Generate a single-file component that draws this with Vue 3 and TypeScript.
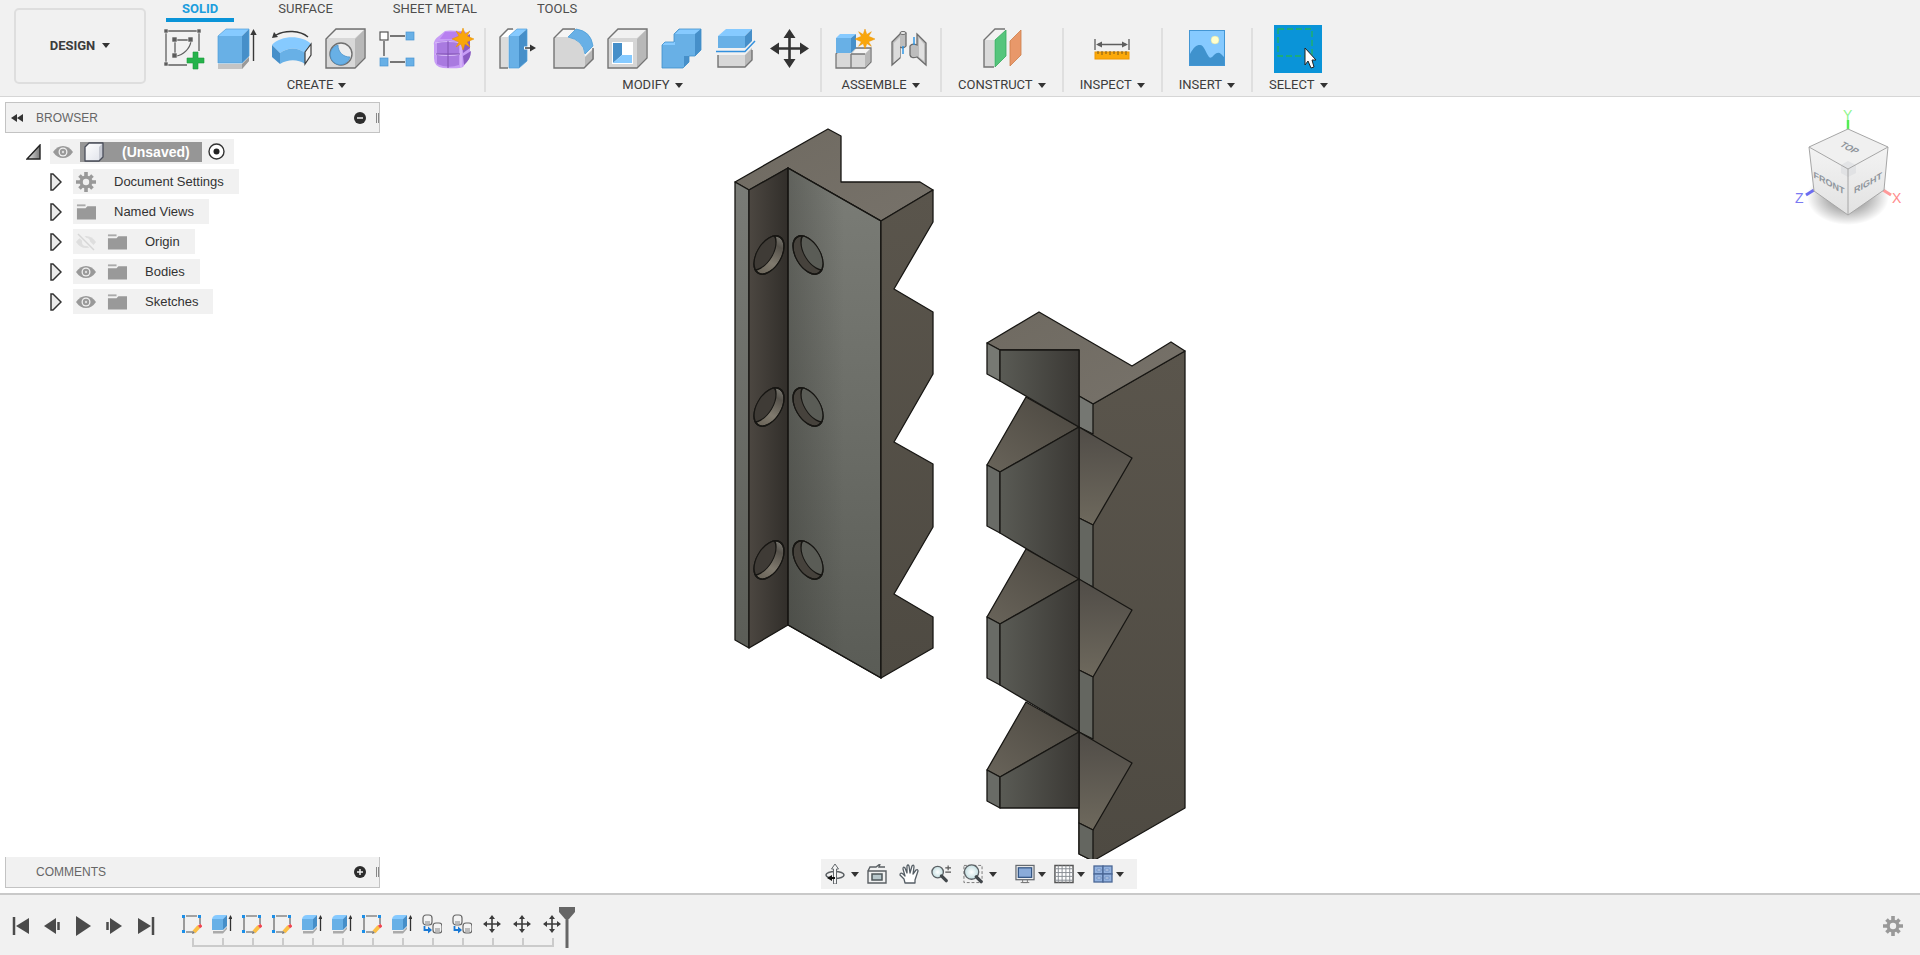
<script setup lang="ts">
import { ref } from 'vue'

interface Tool { id: string; name: string }
interface Group { label: string; tools: Tool[]; compact?: boolean }
interface TreeNode { label: string; icon: string; eye?: 'eye' | 'eye-off' }

const tabs = ['SOLID', 'SURFACE', 'SHEET METAL', 'TOOLS']
const activeTab = ref('SOLID')

const groups: Group[] = [
  {
    label: 'CREATE',
    tools: [
      { id: 'sketch', name: 'Create sketch' },
      { id: 'extrude', name: 'Extrude' },
      { id: 'revolve', name: 'Revolve' },
      { id: 'hole', name: 'Hole' },
      { id: 'pattern', name: 'Rectangular pattern' },
      { id: 'form', name: 'Create form' },
    ],
  },
  {
    label: 'MODIFY',
    tools: [
      { id: 'presspull', name: 'Press pull' },
      { id: 'fillet', name: 'Fillet' },
      { id: 'shell', name: 'Shell' },
      { id: 'combine', name: 'Combine' },
      { id: 'split', name: 'Split body' },
      { id: 'move', name: 'Move' },
    ],
  },
  {
    label: 'ASSEMBLE',
    tools: [
      { id: 'component', name: 'New component' },
      { id: 'joint', name: 'Joint' },
    ],
  },
  { label: 'CONSTRUCT', compact: true, tools: [{ id: 'plane', name: 'Offset plane' }] },
  { label: 'INSPECT', compact: true, tools: [{ id: 'measure', name: 'Measure' }] },
  { label: 'INSERT', compact: true, tools: [{ id: 'image', name: 'Insert image' }] },
  { label: 'SELECT', compact: true, tools: [{ id: 'select', name: 'Select' }] },
]

const nodes: TreeNode[] = [
  { label: 'Document Settings', icon: 'gear' },
  { label: 'Named Views', icon: 'folder' },
  { label: 'Origin', icon: 'folder', eye: 'eye-off' },
  { label: 'Bodies', icon: 'folder', eye: 'eye' },
  { label: 'Sketches', icon: 'folder', eye: 'eye' },
]

const playback: Tool[] = [
  { id: 'pb-first', name: 'Go to start' },
  { id: 'pb-prev', name: 'Step back' },
  { id: 'pb-play', name: 'Play' },
  { id: 'pb-next', name: 'Step forward' },
  { id: 'pb-last', name: 'Go to end' },
]

const features = [
  't-sketch', 't-extrude', 't-sketch', 't-sketch', 't-extrude', 't-extrude', 't-sketch',
  't-extrude', 't-copy', 't-copy', 't-move', 't-move', 't-move',
]

const holeRows = [255, 407, 560]
const teeth = [0, 152, 305]
</script>

<template>
  <svg class="sprite" aria-hidden="true">
    <defs>
      <linearGradient id="g-tri" x1="0" y1="0" x2="1" y2="0"><stop offset="0" stop-color="#eee" /><stop offset="1" stop-color="#777" /></linearGradient>
      <linearGradient id="g-cube" x1="0" y1="0" x2="1" y2="1"><stop offset="0" stop-color="#fff" /><stop offset="1" stop-color="#dfe2ea" /></linearGradient>
      <radialGradient id="g-lens"><stop offset="0" stop-color="#fff" /><stop offset="1" stop-color="#c4dfe2" /></radialGradient>
    </defs>

    <symbol id="sketch" viewBox="0 0 42 42">
      <path d="M3 3H36M3 3V37M3 37H24M36 3V23" stroke="#606060" stroke-width="1.3" fill="none" />
      <path d="M12 12H28M12 12V28M28 13C27 21 20 27 13 28" stroke="#606060" stroke-width="1.3" fill="none" />
      <path d="M1 1h4v4h-4zM34 1h4v4h-4zM1 34h4v4h-4zM9 9h5v5h-5zM25 9h5v5h-5zM9 25h5v5h-5z" fill="#5c5c5c" stroke="#f1f1f1" stroke-width=".6" />
      <path d="M30 24h5v6h6v5h-6v6h-5v-6h-6v-5h6z" fill="#25b34b" stroke="#179a3b" stroke-width=".6" />
    </symbol>
    <symbol id="extrude" viewBox="0 0 42 42">
      <path d="M1 36h24l7-7v4l-7 8H1z" fill="#c4c4c4" /><path d="M25 36l7-7v4l-7 8z" fill="#999" />
      <path d="M1 8L9 1H32L25 8z" fill="#86caff" /><path d="M1 8H25V35H1z" fill="#68b0e6" /><path d="M25 8L32 1V28L25 35z" fill="#468fc9" />
      <path d="M1 8L9 1H32V28L25 35H1z" fill="none" stroke="#4d9ed8" stroke-width=".7" />
      <path d="M36.500 33V4" stroke="#383838" stroke-width="1.4" /><path d="M36.500 1l3.200 6h-6.400z" fill="#383838" />
    </symbol>
    <symbol id="revolve" viewBox="0 0 42 42">
      <path d="M5 7C14 2 29 2 37 9" fill="none" stroke="#383838" stroke-width="1.400" /><path d="M1 10l2-6 4 5z" fill="#383838" />
      <path d="M1 17C10 7 31 7 40 16L34 25C27 19 17 19 9 25z" fill="#86caff" />
      <path d="M1 17L9 25V36L1 29z" fill="#468fc9" /><path d="M9 25C17 19 27 19 34 25V36C27 31 17 31 9 36z" fill="#68b0e6" />
      <path d="M34 24L40 16V27L34 36z" fill="#f4f4f4" stroke="#3c3c3c" stroke-width="1.200" />
    </symbol>
    <symbol id="hole" viewBox="0 0 42 42">
      <path d="M1 11L11 1H40V30L30 40H1z" fill="#d8d8d8" /><path d="M2 10L11 2H39L30 10z" fill="#f1f1f1" /><path d="M30 11L39 2V30L30 39z" fill="#b8b8b8" />
      <path d="M1 11L11 1H40V30L30 40H1z" fill="none" stroke="#707070" stroke-width="1.400" />
      <circle cx="16" cy="26" r="11" fill="#eee" stroke="#707070" stroke-width="1.400" /><path d="M13 17A10 10 0 1 0 25 29C18 29 13 24 13 17z" fill="#68b0e6" stroke="#468fc9" stroke-width=".7" />
    </symbol>
    <symbol id="pattern" viewBox="0 0 42 42">
      <path d="M11 8H26M5 13V28M11 34H26" stroke="#4c4c4c" stroke-width="1.300" /><rect x="1" y="4" width="8" height="8" fill="#fff" stroke="#555" stroke-width="1.200" />
      <g fill="#68b0e6" stroke="#4a96d2" stroke-width=".7"><rect x="27" y="4" width="8" height="8" /><rect x="1" y="30" width="8" height="8" /><rect x="27" y="30" width="8" height="8" /></g>
    </symbol>
    <symbol id="form" viewBox="0 0 42 42">
      <path d="M1 17Q0 12 6 8L12 3Q15 2 28 3Q37 3 37 12V29L30 39Q27 41 10 40Q1 39 1 30z" fill="#c79cf6" />
      <path d="M12 4H30L26 11H7z" fill="#b77ff0" /><path d="M4 14Q15 11 26 14V37Q15 41 4 36z" fill="#a97ae0" /><path d="M29 12L37 6V20L30 25zM30 28L38 23Q38 31 31 37z" fill="#8a5ac2" />
      <path d="M2 15Q15 12 28 15V39M2 26Q15 29 28 26" fill="none" stroke="#d9bdf9" stroke-width="1.200" /><path d="M15 13V40M3 26H27" stroke="#7e51b0" stroke-width="1" />
      <use href="#spark" x="19" y="0" width="22" height="22" />
    </symbol>
    <symbol id="spark" viewBox="0 0 22 22"><path d="M11 0l2 6 5-3-3 5 7 3-7 3 3 5-5-3-2 6-2-6-5 3 3-5-7-3 7-3-3-5 5 3z" fill="#f9a60a" stroke="#e99000" stroke-width=".5" /></symbol>

    <symbol id="presspull" viewBox="0 0 42 42">
      <path d="M1 9L9 1H15L9 9V40H1z" fill="#dcdcdc" /><path d="M2 9L9 2H16L10 9z" fill="#fff" /><path d="M9 40H1V9L9 1H14" fill="none" stroke="#747474" stroke-width="1.400" />
      <path d="M10 8L18 1H28L20 8z" fill="#86caff" /><path d="M10 8H20V40H10z" fill="#68b0e6" /><path d="M20 8L28 1V33L20 40z" fill="#468fc9" /><path d="M10 8L18 1H28V33L20 40H10z" fill="none" stroke="#4d9ed8" stroke-width=".7" />
      <path d="M25 20H33" stroke="#fff" stroke-width="3" /><path d="M26 20H34" stroke="#333" stroke-width="1.400" /><path d="M31 16.500L37 20l-6 3.500z" fill="#333" />
    </symbol>
    <symbol id="fillet" viewBox="0 0 42 42">
      <path d="M1 10L10 1H22L15 9Q30 12 32 29L41 21V31L31 40H1z" fill="#d6d6d6" /><path d="M2 9L10 2H22L15 9z" fill="#f5f5f5" /><path d="M32 29L41 20V31L32 39z" fill="#b8b8b8" />
      <path d="M22 1H10L1 10V40H31L40 31V20" fill="none" stroke="#747474" stroke-width="1.400" /><path d="M15 9L23 1Q38 3 40 18L32 26Q30 12 15 9z" fill="#68b0e6" stroke="#4d9ed8" stroke-width=".8" />
    </symbol>
    <symbol id="shell" viewBox="0 0 42 42">
      <path d="M1 11L11 1H40V30L30 40H1z" fill="#d6d6d6" /><path d="M2 10L11 2H39L30 10z" fill="#f1f1f1" /><path d="M30 11L39 2V30L30 39z" fill="#b8b8b8" /><path d="M1 11L11 1H40V30L30 40H1z" fill="none" stroke="#747474" stroke-width="1.400" />
      <rect x="5" y="14" width="21" height="22" fill="#fff" /><path d="M6 15H15V27L6 35z" fill="#468fc9" /><path d="M15 27H25V35H6z" fill="#86caff" />
    </symbol>
    <symbol id="combine" viewBox="0 0 42 42">
      <path d="M1 17L4 14H13V6L18 1H40V22L34 28H28V34L22 40H1z" fill="#68b0e6" /><path d="M14 6L19 1H40L34 6zM1 17L4 14H14V17z" fill="#86caff" /><path d="M34 6L40 1V22L34 28zM23 28H28V34L23 39z" fill="#468fc9" />
      <path d="M1 17L4 14H13V6L18 1H40V22L34 28H28V34L22 40H1z" fill="none" stroke="#3f8fca" stroke-width=".8" />
    </symbol>
    <symbol id="split" viewBox="0 0 42 42">
      <path d="M3 8L11 1H37L30 8z" fill="#86caff" /><path d="M3 8H30V20H3z" fill="#68b0e6" /><path d="M30 8L37 1V13L30 20z" fill="#468fc9" /><path d="M1 23.500H30L40 13" fill="none" stroke="#3290de" stroke-width="1.500" />
      <path d="M3 27H30V39H3z" fill="#d8d8d8" /><path d="M30 27L37 20V32L30 39z" fill="#b8b8b8" /><path d="M3 27V39H30L37 32V22" fill="none" stroke="#747474" stroke-width="1.400" />
    </symbol>
    <symbol id="move" viewBox="0 0 42 42">
      <path d="M20.500 6V36M6 20.500H35" stroke="#333" stroke-width="2.600" /><path d="M20.500 1l6 9h-12zM20.500 40l6-9h-12zM1 20.500l9-6v12zM40 20.500l-9-6v12z" fill="#333" />
    </symbol>
    <symbol id="component" viewBox="0 0 42 42">
      <path d="M1 26L6 20H36V34L30 40H1z" fill="#d8d8d8" stroke="#777" stroke-width="1.300" /><path d="M17 26L21 21H35L30 26z" fill="#f5f5f5" /><path d="M30 26L35 21V34L30 39z" fill="#b8b8b8" /><path d="M16 26V40M16 26H30" stroke="#777" stroke-width="1.300" />
      <path d="M1 10L5 6H21L16 10z" fill="#86caff" /><path d="M1 10H16V25H1z" fill="#68b0e6" /><path d="M16 10L21 6V20L16 25z" fill="#468fc9" /><use href="#spark" x="20" y="1" width="20" height="20" />
    </symbol>
    <symbol id="joint" viewBox="0 0 42 42">
      <path d="M3 14L12 5Q14 3 17 5V18Q15 21 11 19V30L3 37z" fill="#bdbdbd" stroke="#6c6c6c" stroke-width="1.300" /><path d="M5 15L11 9V29L5 34z" fill="#dcdcdc" /><ellipse cx="14" cy="5" rx="3" ry="1.500" fill="#eee" stroke="#6c6c6c" />
      <path d="M28 6L37 15V37L28 29Q22 31 21 27V18Q23 15 28 17z" fill="#bdbdbd" stroke="#6c6c6c" stroke-width="1.300" /><path d="M30 10L35 16V33L30 29z" fill="#e0e0e0" /><path d="M14 18V26M25 9V17" stroke="#2492e6" stroke-width="1.400" />
    </symbol>
    <symbol id="plane" viewBox="0 0 42 42">
      <path d="M3 12L13 2H24L13 13V39H3z" fill="#f2f2f2" /><path d="M3 12H13V39H3z" fill="#dadada" /><path d="M13 39H3V12L14 1H24" fill="none" stroke="#747474" stroke-width="1.400" /><path d="M14 12L25 2V28L14 39z" fill="#55c57c" stroke="#35a95d" stroke-width=".8" /><path d="M29 13L40 2V27L29 38z" fill="#e8986a" stroke="#cd7d4a" stroke-width=".8" />
    </symbol>
    <symbol id="measure" viewBox="0 0 42 42">
      <path d="M4 11V22M38 11V22M7 16.500H35" stroke="#5e5e5e" stroke-width="1.300" /><path d="M5 16.500l6-3v6zM37 16.500l-6-3v6z" fill="#5e5e5e" /><rect x="4" y="24" width="34" height="7" fill="#fba90a" stroke="#ee9600" /><path d="M7 23v3M11 23v4M15 23v3M19 23v4M23 23v3M27 23v4M31 23v3M35 23v4" stroke="#77591c" />
    </symbol>
    <symbol id="image" viewBox="0 0 42 42">
      <rect x="3.500" y="2.500" width="35" height="35" fill="#86caff" stroke="#4396d4" /><path d="M4 26C8 19 10 17 14 17S20 25 23 29Q25 31 28 27Q32 23 35 26L38 29V37H4z" fill="#3f92cd" /><circle cx="29" cy="12" r="4" fill="#ffffcd" stroke="#d7dca0" stroke-width=".5" />
    </symbol>
    <symbol id="select" viewBox="0 0 48 48">
      <rect width="48" height="48" fill="#0a94d8" /><path d="M4 4H38V31H4z" fill="none" stroke="#22b35f" stroke-width="1.300" stroke-dasharray="6 3" /><path d="M31 23V40L34 36L37 43L40 42L38 35H42z" fill="#fff" stroke="#222" stroke-width="1" />
    </symbol>

    <symbol id="eye" viewBox="0 0 20 20"><path d="M0 10Q4 4 10 4T20 10Q16 16 10 16T0 10z" fill="#999" /><circle cx="10" cy="10" r="4.500" fill="#f1f1f1" /><circle cx="10" cy="10" r="3.200" fill="#999" /><circle cx="10" cy="10" r="1.200" fill="#ddd" /></symbol>
    <symbol id="eye-off" viewBox="0 0 20 20"><path d="M0 10Q4 4 10 4T20 10Q16 16 10 16T0 10z" fill="#dedede" /><circle cx="10" cy="10" r="4" fill="#f1f1f1" /><path d="M2 1L19 18" stroke="#f1f1f1" stroke-width="5" /><path d="M2 2L18 18" stroke="#d6d6d6" stroke-width="1.500" /></symbol>
    <symbol id="folder" viewBox="0 0 21 20"><path d="M1 6H10L12 4H21V18H1z" fill="#999" /><path d="M1 3H10" stroke="#aaa" stroke-width="2" /></symbol>
    <symbol id="gear" viewBox="0 0 20 20"><g stroke="#999" stroke-width="3.600"><path d="M10 0V20M0 10H20M3.500 3.500L16.500 16.500M16.500 3.500L3.500 16.500" /></g><circle cx="10" cy="10" r="6.500" fill="#999" /><circle cx="10" cy="10" r="3.200" fill="#f1f1f1" /></symbol>
    <symbol id="box" viewBox="0 0 20 20"><path d="M1 5L5 1H19V15L15 19H1z" fill="url(#g-cube)" /><path d="M15 5L19 1V15L15 19z" fill="#c6c9d2" /><path d="M1 5L5 1H19V15L15 19H1z" fill="none" stroke="#4a4e5a" stroke-width="1.300" stroke-linejoin="round" /></symbol>

    <symbol id="orbit" viewBox="0 0 20 20"><ellipse cx="10" cy="11" rx="9" ry="3.500" fill="none" stroke="#5b6064" stroke-width="1.600" /><path d="M8.500 20V5H6.500L10 0l3.500 5H11.500V20z" fill="#f5f5f5" stroke="#63686c" /><path d="M2 14l5-3v2h3v2H7v2z" fill="#111" /></symbol>
    <symbol id="look" viewBox="0 0 20 20"><path d="M1 7H19V19H1zM1 7L3 3H9L13 0 12 3H18" fill="#f0f1f1" stroke="#5b6064" stroke-width="1.400" /><rect x="5" y="10" width="10" height="6" fill="#b7c7cb" stroke="#4c5558" stroke-width="1.500" /></symbol>
    <symbol id="hand" viewBox="0 0 20 20"><path d="M6 19L5 15 1 11Q1 8 4 10L6 12 4 5Q4 2 6 4L8 9 8 2Q9 0 10 2L11 9 13 2Q15 0 15 3L14 10 17 6Q19 5 19 7L16 16V19z" fill="#fff" stroke="#555e65" stroke-width="1.300" stroke-linejoin="round" /></symbol>
    <symbol id="zoomtool" viewBox="0 0 21 20"><circle cx="7" cy="8" r="6" fill="url(#g-lens)" stroke="#5c6165" stroke-width="1.400" /><path d="M11 12L16 17" stroke="#42474b" stroke-width="3.500" stroke-linecap="round" /><path d="M18 1V6M15 3.500H21M15 8H21" stroke="#555" stroke-width="1.200" /></symbol>
    <symbol id="fit" viewBox="0 0 21 20"><path d="M1 1H20V19H1z" fill="none" stroke="#777" stroke-dasharray="3 2" /><circle cx="9" cy="8" r="7.500" fill="url(#g-lens)" stroke="#5c6165" stroke-width="1.400" /><path d="M14 13L19 18" stroke="#42474b" stroke-width="3.500" stroke-linecap="round" /></symbol>
    <symbol id="display" viewBox="0 0 21 20"><rect x="1" y="1" width="19" height="15" fill="#eee" stroke="#666b70" stroke-width="1.300" /><rect x="3.500" y="3.500" width="14" height="10" fill="#8aabd9" stroke="#315382" stroke-width="1.300" /><path d="M8 16v3h5v-3M6 19h9" fill="none" stroke="#777" /></symbol>
    <symbol id="gridtool" viewBox="0 0 21 20"><path d="M1 1H20V19H1z" fill="#fff" stroke="#555" stroke-width="1.500" /><path d="M4.500 1V19M8.500 1V19M12.500 1V19M16.500 1V19M1 4.500H20M1 8.500H20M1 12.500H20M1 16.500H20" stroke="#868b91" /></symbol>
    <symbol id="views" viewBox="0 0 20 20"><g fill="#93b2df" stroke="#4a6796" stroke-width="1.300"><rect x="1" y="2" width="9" height="8" /><rect x="10" y="2" width="9" height="8" /><rect x="1" y="10" width="9" height="8" /><rect x="10" y="10" width="9" height="8" /></g><path d="M4 5h4v2h-4zM12 5h4v2h-4zM4 13h4v2h-4zM12 13h4v2h-4z" fill="#c4d6f0" stroke="#6685b8" stroke-width=".7" /></symbol>

    <symbol id="pb-first" viewBox="0 0 20 20"><path d="M3 1V19" stroke="#4b4b4b" stroke-width="2.500" /><path d="M5 10L18 2V18z" fill="#4b4b4b" /></symbol>
    <symbol id="pb-prev" viewBox="0 0 20 20"><path d="M2 10L14 2V18z" fill="#4b4b4b" /><path d="M16.500 6V14" stroke="#4b4b4b" stroke-width="2.500" /></symbol>
    <symbol id="pb-play" viewBox="0 0 20 20"><path d="M3 0V20L18 10z" fill="#4b4b4b" /></symbol>
    <symbol id="pb-next" viewBox="0 0 20 20"><path d="M18 10L6 2V18z" fill="#4b4b4b" /><path d="M3.500 6V14" stroke="#4b4b4b" stroke-width="2.500" /></symbol>
    <symbol id="pb-last" viewBox="0 0 20 20"><path d="M18 1V19" stroke="#4b4b4b" stroke-width="2.500" /><path d="M16 10L3 2V18z" fill="#4b4b4b" /></symbol>

    <symbol id="t-sketch" viewBox="0 0 20 20"><path d="M4 2H15M2 4V16M4 18H11M18 4V10" stroke="#555" stroke-width="1.100" /><path d="M0 1h3v3h-3zM16 1h3v3h-3zM0 16h3v3h-3z" fill="#1c8fe8" /><path d="M12 18L17 12.500" stroke="#fbbf45" stroke-width="4" /><path d="M17 13L19.500 11" stroke="#f04450" stroke-width="3.500" /><path d="M10 20l1-3 2 2z" fill="#777" /></symbol>
    <symbol id="t-extrude" viewBox="0 0 20 20"><path d="M1 17H11L15 13V15L11 19.500H1z" fill="#aaa" /><path d="M0 5Q1 1 5 1H15L11 5z" fill="#86caff" /><path d="M0 5H11V16H0z" fill="#68b0e6" /><path d="M11 5L15 1V12L11 16z" fill="#468fc9" /><path d="M18.500 4V17" stroke="#333" stroke-width="1.300" /><path d="M18.500 1l2 4h-4z" fill="#333" /></symbol>
    <symbol id="t-copy" viewBox="0 0 20 20"><g fill="#f3f3f3" stroke="#666" stroke-width="1.200"><rect x="1" y="1" width="9" height="10" rx="3" /><rect x="11" y="9" width="9" height="10" rx="3" /></g><path d="M3 7h5v3h-5zM13 14h5v4h-5z" fill="#bbb" /><path d="M2.500 12V16H6" fill="none" stroke="#1878d4" stroke-width="1.800" /><path d="M6 12.500L10 16l-4 3.500z" fill="#1878d4" /></symbol>
    <symbol id="t-move" viewBox="0 0 20 20"><path d="M10 3V17M3 10H17" stroke="#3c3c3c" stroke-width="1.600" /><path d="M10 1l3 4H7zM10 19l3-4H7zM1 10l4-3v6zM19 10l-4-3v6z" fill="#3c3c3c" /></symbol>
  </svg>

  <div class="app">
    <header class="ribbon">
      <button class="workspace" type="button">DESIGN<i class="caret"></i></button>
      <div class="ribbon-body">
        <nav class="tabs" aria-label="Toolbar tabs">
          <button v-for="tab in tabs" :key="tab" type="button" class="tab" :class="{ active: tab === activeTab }" @click="activeTab = tab">{{ tab }}</button>
        </nav>
        <div class="groups">
          <section v-for="group in groups" :key="group.label" class="group" :class="{ compact: group.compact }">
            <div class="tools">
              <button v-for="tool in group.tools" :key="tool.id" type="button" class="tool" :class="{ chosen: tool.id === 'select' }" :aria-label="tool.name">
                <svg><use :href="'#' + tool.id" /></svg>
              </button>
            </div>
            <button type="button" class="group-label">{{ group.label }}<i class="caret"></i></button>
          </section>
        </div>
      </div>
    </header>

    <main class="viewport">
      <svg class="model" viewBox="730 120 460 745" role="img" aria-label="Two interlocking corner brackets">
        <defs>
          <linearGradient id="m-top" x1="0" y1="0" x2="1" y2="1"><stop offset="0" stop-color="#6f6a61" /><stop offset="1" stop-color="#77726a" /></linearGradient>
          <linearGradient id="m-dark" x1="0" y1="0" x2="1" y2="0"><stop offset="0" stop-color="#4c4741" /><stop offset="1" stop-color="#312e2a" /></linearGradient>
          <linearGradient id="m-front" x1="0" y1="0" x2="0" y2="1"><stop offset="0" stop-color="#7b7d77" /><stop offset=".5" stop-color="#6b6d67" /><stop offset="1" stop-color="#5a5c56" /></linearGradient>
          <linearGradient id="m-shade" x1="0" y1="0" x2="1" y2="0"><stop offset="0" stop-color="#30312d" stop-opacity=".36" /><stop offset=".6" stop-color="#30312d" stop-opacity="0" /></linearGradient>
          <linearGradient id="m-edge" x1="0" y1="0" x2="0" y2="1"><stop offset="0" stop-color="#7a7c77" /><stop offset="1" stop-color="#5b5d57" /></linearGradient>
          <linearGradient id="m-side" x1="0" y1="0" x2="0" y2="1"><stop offset="0" stop-color="#5a554c" /><stop offset="1" stop-color="#4e4a42" /></linearGradient>
          <linearGradient id="m-tooth" x1="0" y1="0" x2="1" y2="0"><stop offset="0" stop-color="#5a5b55" /><stop offset="1" stop-color="#3a3834" /></linearGradient>
          <linearGradient id="m-slope" x1="1" y1="0" x2="0" y2="1"><stop offset="0" stop-color="#4a463f" /><stop offset="1" stop-color="#69645a" /></linearGradient>
          <linearGradient id="m-slope2" x1="0" y1="0" x2="0" y2="1"><stop offset="0" stop-color="#504c47" /><stop offset="1" stop-color="#6e695d" /></linearGradient>
          <linearGradient id="m-rim" x1="0" y1="1" x2="1" y2="0"><stop offset="0" stop-color="#5d574c" /><stop offset=".4" stop-color="#807a6e" /><stop offset=".7" stop-color="#56524b" /><stop offset="1" stop-color="#96968f" /></linearGradient>
          <clipPath id="c-left"><ellipse rx="15" ry="17" transform="skewY(-30)" /></clipPath>
          <clipPath id="c-right"><ellipse rx="15" ry="17" transform="skewY(30)" /></clipPath>
        </defs>
        <g stroke="#171613" stroke-width="1.300" stroke-linejoin="round">
          <path d="M735 182L828 129L841 136V182H920L933 190L881 221L788 168L749 190z" fill="url(#m-top)" />
          <path d="M735 182L749 190V648L735 640z" fill="url(#m-edge)" />
          <path d="M749 190L788 168V625L749 648z" fill="url(#m-dark)" />
          <path d="M788 168L881 221V678L788 625z" fill="url(#m-front)" />
          <path d="M788 168L881 221V678L788 625z" fill="url(#m-shade)" />
          <path d="M881 221L933 190V222L894 289L933 312V374L894 442L933 464V527L894 594L933 617V648L881 678z" fill="url(#m-side)" />
          <template v-for="y in holeRows" :key="y">
            <g :transform="`translate(769 ${y})`">
              <ellipse rx="15" ry="17" transform="skewY(-30)" fill="url(#m-rim)" />
              <g clip-path="url(#c-left)"><ellipse rx="15" ry="17" transform="translate(-8 -4) skewY(-30)" fill="#3f3b36" /></g>
              <ellipse rx="15" ry="17" transform="skewY(-30)" fill="none" />
            </g>
            <g :transform="`translate(808 ${y})`">
              <ellipse rx="15" ry="17" transform="skewY(30)" fill="#46423c" />
              <g clip-path="url(#c-right)"><ellipse rx="15" ry="17" transform="translate(8 -4) skewY(30)" fill="#5a5c56" /></g>
              <ellipse rx="15" ry="17" transform="skewY(30)" fill="none" />
            </g>
          </template>

          <path d="M1093 404L1185 351V808L1093 861L1079 854V396z" fill="url(#m-side)" />
          <path d="M987 343L1039 312L1132 366L1171 342L1185 351L1093 404L1079 396V350H1000z" fill="url(#m-top)" />
          <path d="M1079 396L1093 404V434L1079 427z" fill="#757772" />
          <g v-for="(t, i) in teeth" :key="t" :transform="`translate(0 ${t})`">
            <path d="M1026 397L1079 427L1000 472L987 465z" fill="url(#m-slope)" />
            <path d="M1079 427L1132 458L1093 525L1079 518z" fill="url(#m-slope2)" />
            <path :d="i < 2 ? 'M1079 518L1093 525V587L1079 580z' : 'M1079 518L1093 525V556L1079 549z'" fill="#646660" />
            <path :d="i < 2 ? 'M987 465L1000 472V533L987 526z' : 'M987 465L1000 472V503L987 496z'" fill="#696b66" />
            <path :d="i < 2 ? 'M1000 472L1079 427V580L1000 533z' : 'M1000 472L1079 427V503H1000z'" fill="url(#m-tooth)" />
          </g>
          <path d="M987 343L1000 350V381L987 374z" fill="#777973" />
          <path d="M1000 350H1079V427L1000 381z" fill="url(#m-tooth)" />
        </g>
      </svg>

      <aside class="browser">
        <div class="panel">
          <button type="button" class="plain" aria-label="Collapse panel"><svg width="12" height="10" viewBox="0 0 12 10"><path d="M6 1V9L0 5zM12 1V9L6 5z" fill="#333" /></svg></button>
          <h2>BROWSER</h2>
          <button type="button" class="plain end" aria-label="Minimize"><svg width="12" height="12" viewBox="0 0 12 12"><circle cx="6" cy="6" r="6" fill="#2d2d2d" /><path d="M3 6H9" stroke="#f1f1f1" stroke-width="1.500" /></svg></button>
          <i class="grip"></i>
        </div>
        <ul class="tree">
          <li class="root">
            <button type="button" class="plain" aria-label="Collapse"><svg width="15" height="16" viewBox="0 0 15 16"><path d="M1 15L14 1V15z" fill="url(#g-tri)" stroke="#222" stroke-width="1.400" /></svg></button>
            <div class="chip">
              <svg class="ico"><use href="#eye" /></svg>
              <span class="doc"><svg class="ico"><use href="#box" /></svg>(Unsaved)</span>
              <svg width="17" height="17" viewBox="0 0 17 17"><circle cx="8.500" cy="8.500" r="7.500" fill="#fff" stroke="#333" stroke-width="1.400" /><circle cx="8.500" cy="8.500" r="3" fill="#222" /></svg>
            </div>
          </li>
          <li v-for="node in nodes" :key="node.label" class="child">
            <button type="button" class="plain" :aria-label="'Expand ' + node.label"><svg width="12" height="18" viewBox="0 0 12 18"><path d="M1 1H3L11 9L3 17H1z" fill="#eaeaea" stroke="#333" stroke-width="1.500" /></svg></button>
            <div class="chip">
              <svg v-if="node.eye" class="ico"><use :href="'#' + node.eye" /></svg>
              <svg class="ico"><use :href="'#' + node.icon" /></svg>
              <span>{{ node.label }}</span>
            </div>
          </li>
        </ul>
      </aside>

      <svg class="viewcube" width="112" height="132" viewBox="0 0 112 132" role="img" aria-label="View cube">
        <defs>
          <radialGradient id="v-shadow"><stop offset=".4" stop-color="#000" stop-opacity=".35" /><stop offset="1" stop-color="#000" stop-opacity="0" /></radialGradient>
          <linearGradient id="v-face" x1="0" y1="0" x2="0" y2="1"><stop offset="0" stop-color="#f3f3f3" /><stop offset="1" stop-color="#e2e2e2" /></linearGradient>
        </defs>
        <ellipse cx="58" cy="97" rx="41" ry="28" fill="url(#v-shadow)" />
        <path d="M58 30V20" stroke="#55ee55" stroke-width="2.500" /><path d="M24 90L16 95" stroke="#6c6cf0" stroke-width="3" /><path d="M93 90L101 95" stroke="#ff9a9a" stroke-width="3" />
        <path d="M58 29L98 47L58 69L19 47z" fill="#f0f0f0" /><path d="M19 47L58 69V115L24 91z" fill="url(#v-face)" /><path d="M98 47L58 69V115L94 90z" fill="url(#v-face)" />
        <path d="M58 61L66 65V73L58 77L51 73V65z" fill="#d5d8db" opacity=".5" />
        <path d="M58 29L98 47L94 90L58 115L24 91L19 47zM19 47L58 69L98 47M58 69V115" fill="none" stroke="#a6a6a6" />
        <g class="face">
          <text transform="translate(57 50) rotate(28) skewX(-22)" text-anchor="middle">TOP</text>
          <text transform="translate(39 86) skewY(29)" text-anchor="middle">FRONT</text>
          <text transform="translate(78 86) skewY(-29)" text-anchor="middle">RIGHT</text>
        </g>
        <g class="axis"><text x="53" y="20" fill="#8ef58e">Y</text><text x="5" y="103" fill="#7a7af2">Z</text><text x="102" y="103" fill="#ff8b8b">X</text></g>
      </svg>

      <div class="panel comments">
        <h2>COMMENTS</h2>
        <button type="button" class="plain end" aria-label="Expand comments"><svg width="12" height="12" viewBox="0 0 12 12"><circle cx="6" cy="6" r="6" fill="#2d2d2d" /><path d="M3 6H9M6 3V9" stroke="#f1f1f1" stroke-width="1.500" /></svg></button>
        <i class="grip"></i>
      </div>

      <nav class="navbar" aria-label="Navigation">
        <button type="button" class="plain" aria-label="Orbit"><svg class="ico"><use href="#orbit" /></svg><i class="caret wide"></i></button>
        <button type="button" class="plain" aria-label="Look at"><svg class="ico"><use href="#look" /></svg></button>
        <button type="button" class="plain step" aria-label="Pan"><svg class="ico"><use href="#hand" /></svg></button>
        <button type="button" class="plain step" aria-label="Zoom"><svg class="ico"><use href="#zoomtool" /></svg></button>
        <button type="button" class="plain step" aria-label="Fit"><svg class="ico"><use href="#fit" /></svg><i class="caret wide"></i></button>
        <button type="button" class="plain far" aria-label="Display settings"><svg class="ico"><use href="#display" /></svg><i class="caret"></i></button>
        <button type="button" class="plain" aria-label="Grid and snaps"><svg class="ico"><use href="#gridtool" /></svg><i class="caret"></i></button>
        <button type="button" class="plain" aria-label="Viewports"><svg class="ico"><use href="#views" /></svg><i class="caret"></i></button>
      </nav>
    </main>

    <footer class="timeline">
      <div class="playback">
        <button v-for="p in playback" :key="p.id" type="button" class="plain" :aria-label="p.name"><svg class="ico"><use :href="'#' + p.id" /></svg></button>
      </div>
      <div class="history">
        <ol>
          <li v-for="(f, i) in features" :key="i"><svg class="ico"><use :href="'#' + f" /></svg></li>
        </ol>
        <div class="track"><i v-for="n in features.length" :key="n"></i></div>
      </div>
      <svg class="marker" width="16" height="41" viewBox="0 0 16 41" aria-hidden="true"><path d="M0 0H16V5L10 12H6L0 5z" fill="#666" /><path d="M8 10V41" stroke="#666" stroke-width="3" /></svg>
      <button type="button" class="plain settings" aria-label="Timeline settings"><svg class="ico"><use href="#gear" /></svg></button>
    </footer>
  </div>
</template>

<style>
html,
body {
  margin: 0;
  background: #fff;
}
</style>

<style scoped>
.app {
  display: flex;
  flex-direction: column;
  min-height: 100vh;
  font-family: Roboto, "Liberation Sans", Arial, sans-serif;
  font-size: 13px;
  line-height: 16px;
  color: #3c3c3c;
}
.sprite {
  position: absolute;
  width: 0;
  height: 0;
}
button {
  padding: 0;
  border: 0;
  background: none;
  font: inherit;
  color: inherit;
  cursor: pointer;
}
svg {
  display: block;
  flex: none;
}
.plain {
  display: flex;
  align-items: center;
}
.ico {
  width: 20px;
  height: 20px;
}
.caret {
  display: inline-block;
  margin-left: 5px;
  border: 4px solid transparent;
  border-top: 5px solid #333;
  border-bottom: 0;
}

.ribbon {
  display: flex;
  box-sizing: border-box;
  height: 97px;
  padding-left: 14px;
  background: #f1f1f1;
  border-bottom: 1px solid #d6d6d6;
}
.workspace {
  box-sizing: border-box;
  width: 132px;
  height: 76px;
  margin: 8px 17px 0 0;
  border: 2px solid #dedede;
  border-radius: 5px;
  font-weight: 700;
}
.workspace .caret {
  margin: 0 0 2px 7px;
}
.ribbon-body {
  flex: 1;
}
.tabs {
  display: flex;
  gap: 28px;
  height: 22px;
  padding-left: 3px;
}
.tab {
  height: 22px;
  padding: 0 16px;
  border-bottom: 4px solid transparent;
  color: #4d4d4d;
}
.tab.active {
  border-color: #0a94d8;
  font-weight: 700;
  color: #1b9ddd;
}
.groups {
  display: flex;
  padding-top: 6px;
}
.group {
  display: flex;
  flex-direction: column;
  align-items: center;
  height: 64px;
  padding: 0 9px 0 13px;
  border-right: 2px solid #dfdfdf;
}
.group:first-child {
  padding-left: 0;
}
.group.compact {
  padding: 0 16px;
}
.group:last-child {
  border: 0;
}
.tools {
  display: flex;
  gap: 12px;
  height: 42px;
}
.tool {
  width: 42px;
  height: 42px;
}
.tool svg {
  width: 42px;
  height: 42px;
}
.tool.chosen {
  display: flex;
  align-items: center;
  justify-content: center;
}
.tool.chosen svg {
  width: 48px;
  height: 48px;
}
.group-label {
  display: flex;
  align-items: center;
  margin: 7px 5px 0 0;
}
.compact .group-label {
  margin-right: 0;
}

.viewport {
  position: relative;
  display: flex;
  flex: 1;
  justify-content: center;
  align-items: flex-start;
  overflow: hidden;
}
.model {
  width: 460px;
  height: 745px;
  margin-top: 23px;
}
.browser {
  position: absolute;
  top: 5px;
  left: 5px;
}
.panel {
  display: flex;
  align-items: center;
  box-sizing: border-box;
  width: 375px;
  height: 31px;
  padding: 0 0 0 5px;
  border: 1px solid #c3c3c3;
  background: #f1f1f1;
}
.panel h2 {
  margin: 0 0 0 13px;
  font: 400 12px/16px "Liberation Sans", Arial, sans-serif;
  color: #666;
}
.end {
  margin-left: auto;
}
.grip {
  width: 1px;
  height: 10px;
  margin-left: 10px;
  border: solid #888;
  border-width: 0 1px;
}
.tree {
  margin: 6px 0 0;
  padding: 0;
  list-style: none;
  font: 13px/16px "Liberation Sans", Arial, sans-serif;
  color: #333;
}
.tree li {
  display: flex;
  align-items: center;
  height: 25px;
  margin-bottom: 5px;
}
.root {
  padding-left: 21px;
  gap: 9px;
}
.child {
  padding-left: 45px;
  gap: 11px;
}
.chip {
  display: flex;
  align-items: center;
  gap: 11px;
  height: 25px;
  padding: 0 15px 0 3px;
  background: #f1f1f1;
}
.child .chip span {
  padding-left: 7px;
}
.root .chip {
  gap: 6px;
  padding-right: 9px;
}
.root .chip > .ico {
  margin-right: 1px;
}
.doc {
  display: flex;
  align-items: center;
  gap: 18px;
  height: 20px;
  padding: 0 12px 0 4px;
  background: #969696;
  font-size: 14px;
  font-weight: 700;
  color: #fff;
}
.viewcube {
  position: absolute;
  top: 3px;
  right: 18px;
}
.face {
  font: 700 9px "Liberation Sans", Arial, sans-serif;
  fill: #8f959c;
}
.axis {
  font: 14px "Liberation Sans", Arial, sans-serif;
}
.comments {
  position: absolute;
  bottom: 5px;
  left: 5px;
  border-top: 0;
}
.comments h2 {
  margin-left: 25px;
}
.navbar {
  position: absolute;
  bottom: 4px;
  left: 50%;
  display: flex;
  align-items: center;
  gap: 8px;
  box-sizing: border-box;
  width: 316px;
  height: 30px;
  margin-left: -139px;
  padding-left: 4px;
  background: #f1f1f1;
}
.navbar .caret {
  margin-left: 3px;
}
.navbar .caret.wide {
  margin-left: 6px;
}
.navbar .step {
  margin-left: 4px;
}
.navbar .far {
  margin-left: 10px;
}

.timeline {
  display: flex;
  align-items: flex-start;
  box-sizing: border-box;
  height: 62px;
  padding: 0 17px 0 11px;
  background: #f1f1f1;
  border-top: 2px solid #c9c9c9;
}
.playback {
  display: flex;
  gap: 11px;
  margin: 21px 27px 0 0;
}
.history ol {
  display: flex;
  gap: 10px;
  margin: 19px 0 4px;
  padding: 0;
  list-style: none;
}
.track {
  display: flex;
  padding-left: 10px;
}
.track i {
  box-sizing: border-box;
  width: 30px;
  height: 9px;
  border: solid #cbcbcb;
  border-width: 0 0 2px 2px;
}
.track i:last-child {
  width: 2px;
}
.marker {
  margin: 12px 0 0 -3px;
}
.settings {
  margin: 21px 0 0 auto;
}
</style>
